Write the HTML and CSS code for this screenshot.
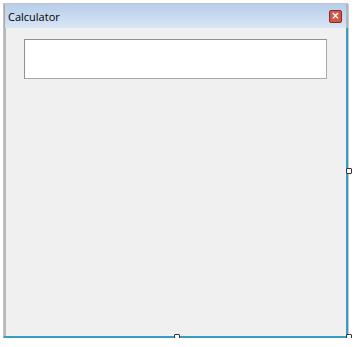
FILE: index.html
```html
<!DOCTYPE html>
<html lang="en">
<head>
    <meta charset="UTF-8">
    <title>Calculator</title>
    <link rel="stylesheet" href="styles.css">
</head>
<body>
    <div id="designer">
        <div id="form">
            <div id="title-bar">
                <span id="title">Calculator</span>
                <span id="close-btn">&#215;</span>
            </div>
            <div id="client">
                <div id="display"></div>
            </div>
            <span class="grip" id="grip-right"></span>
            <span class="grip" id="grip-bottom"></span>
            <span class="grip" id="grip-corner"></span>
        </div>
    </div>
</body>
</html>
```

FILE: styles.css
```css
*{
    margin: 0;
    padding: 0;
    box-sizing: border-box;
}
body{
    background: #ffffff;
    font-family: "Open Sans", "Liberation Sans", sans-serif;
}
#designer{
    padding: 3px 0 0 3px;
}
#form{
    position: relative;
    width: 345px;
    height: 335px;
    border: 1px solid #c4c4c4;
    border-right: none;
    border-bottom: 2px solid #3a9cc4;
    box-shadow: 1px 1px 0 #c8c8c8;
    display: flex;
    flex-direction: column;
}
#title-bar{
    height: 24px;
    display: flex;
    align-items: center;
    justify-content: space-between;
    padding: 1px 4px 0 3px;
    background: linear-gradient(#b6cdea, #d9e6f6);
    border-left: 1px solid #a8a8a8;
    border-right: 2px solid #b0b8c4;
}
#title{
    font-size: 11px;
    color: #000000;
    line-height: 14px;
}
#close-btn{
    width: 13px;
    height: 13px;
    background: #d0584a;
    border: 1px solid #8c2a20;
    border-radius: 2px;
    color: #ffffff;
    font-size: 10px;
    line-height: 10px;
    text-align: center;
    font-weight: bold;
    font-family: "DejaVu Sans", sans-serif;
}
#client{
    flex: 1;
    background: #f0f0f0;
    border-left: 2px solid #b8b8b8;
    border-right: 2px solid #3a9cc4;
    padding: 11px 0 0 18px;
}
#display{
    width: 303px;
    height: 40px;
    background: #ffffff;
    border: 1px solid #8f8f8f;
    border-right-color: #a8a8a8;
    border-bottom-color: #a8a8a8;
}
.grip{
    position: absolute;
    width: 6px;
    height: 6px;
    background: #ffffff;
    border: 1px solid #333333;
    border-radius: 1px;
}
#grip-right{
    right: -4px;
    top: 164px;
}
#grip-bottom{
    left: 170px;
    bottom: -4px;
}
#grip-corner{
    right: -4px;
    bottom: -4px;
}
```
